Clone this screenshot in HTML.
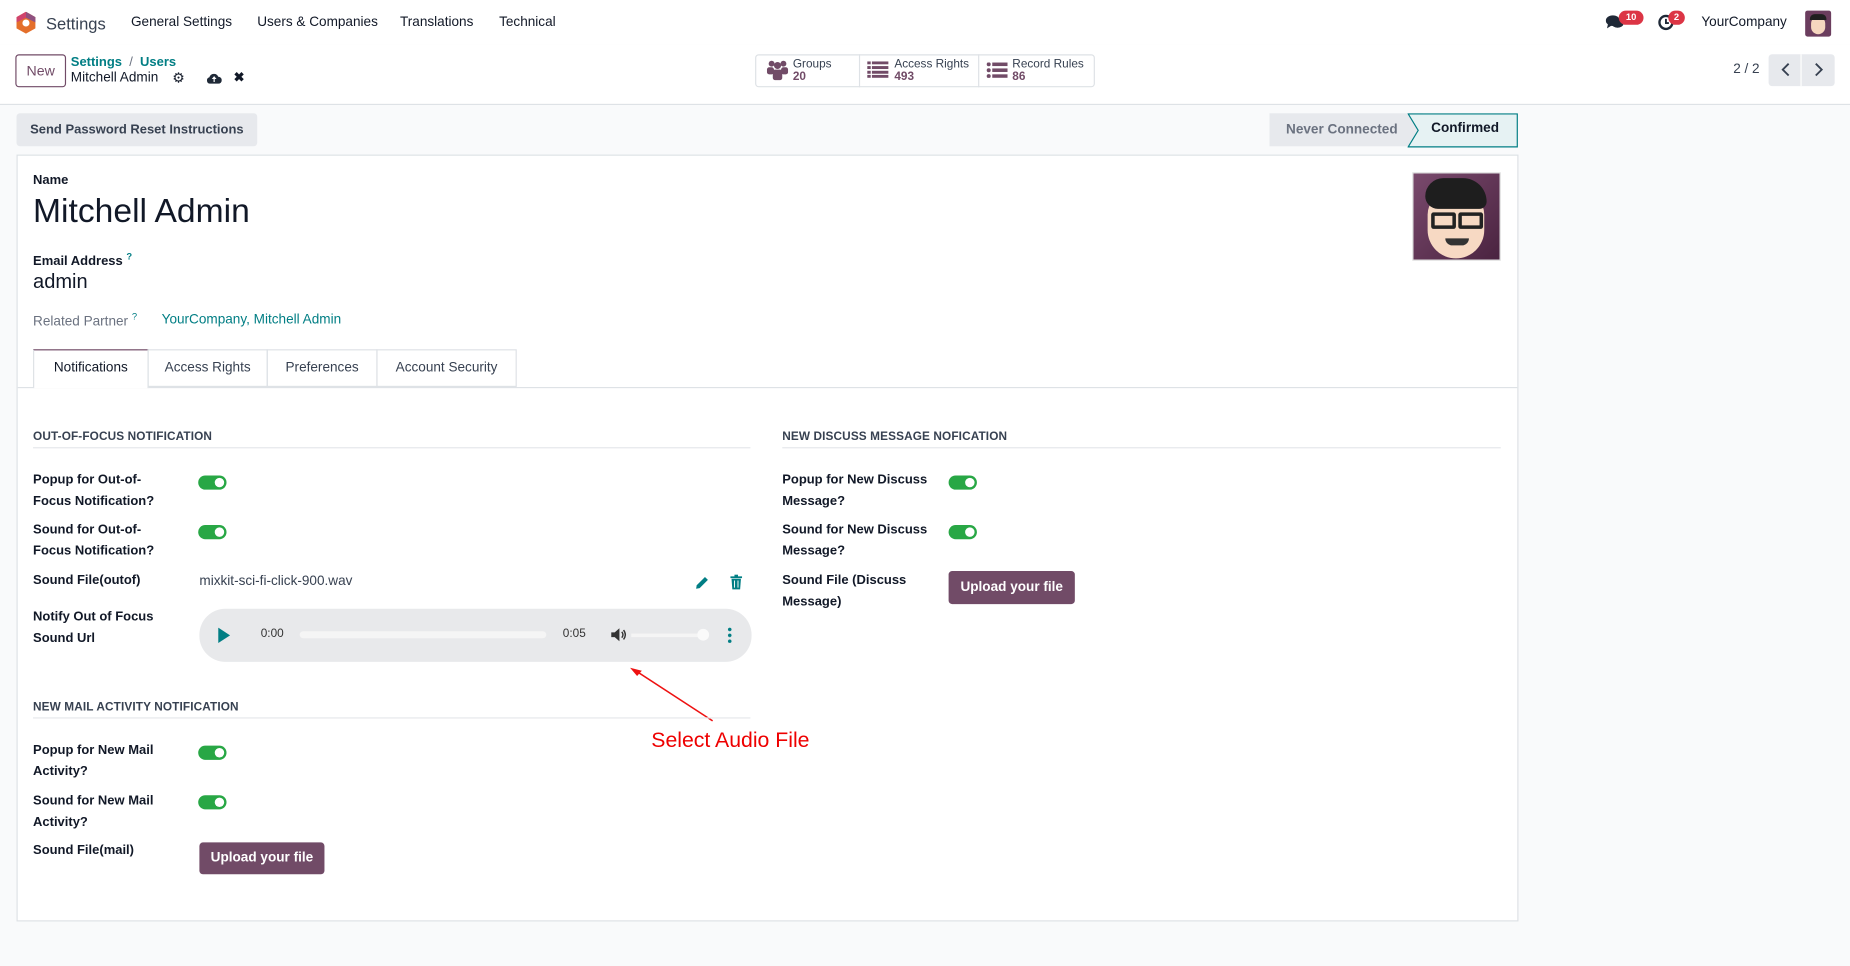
<!DOCTYPE html>
<html><head><meta charset="utf-8"><style>
*{box-sizing:border-box;margin:0;padding:0}
html,body{width:1850px;height:966px;overflow:hidden;background:#f9fafb;font-family:"Liberation Sans",sans-serif;color:#1f2937}
#w{position:absolute;left:0;top:0;width:1568px;height:819px;transform:scale(1.17985);transform-origin:0 0;background:#f9fafb}
.a{position:absolute;white-space:nowrap}
.nav{font-size:11.5px;color:#111827}
.lbl{font-size:11px;font-weight:bold;color:#111827;line-height:17.5px}
.tog{position:absolute;width:24px;height:12px;border-radius:6px;background:#28a745}
.tog:after{content:"";position:absolute;right:2px;top:2px;width:8px;height:8px;border-radius:50%;background:#fff}
.btn{position:absolute;background:#714b67;color:#fff;font-size:11.5px;font-weight:bold;border-radius:3px;text-align:center}
.h{font-size:10px;font-weight:bold;color:#374151;letter-spacing:.1px}
.line{position:absolute;height:1px;background:#e5e7eb}
</style></head><body><div id="w">
<div class="a" style="left:0;top:0;width:1568px;height:38px;background:#fff"></div>
<svg class="a" style="left:13px;top:10px" width="18" height="19" viewBox="0 0 18 19"><path d="M9 0L17 4.5V14L9 18.5L1 14V4.5Z" fill="#e46f2b"/><path d="M9 0L17 4.5V9L9 5Z" fill="#8f5180"/><path d="M1 4.5L9 0V5L1 9Z" fill="#d0446d"/><circle cx="9" cy="9.5" r="3" fill="#fff"/></svg>
<div class="a" style="left:39px;top:12px;font-size:14px;color:#374151">Settings</div>
<div class="a nav" style="left:111px;top:13px">General Settings</div>
<div class="a nav" style="left:218px;top:13px">Users &amp; Companies</div>
<div class="a nav" style="left:339px;top:13px">Translations</div>
<div class="a nav" style="left:423px;top:13px">Technical</div>
<svg class="a" style="left:1361px;top:12px" width="16" height="14" viewBox="0 0 16 14"><ellipse cx="6" cy="5.5" rx="6" ry="4.5" fill="#1f2937"/><path d="M2 8L1 12L6 9Z" fill="#1f2937"/><ellipse cx="10" cy="8" rx="5" ry="3.5" fill="#1f2937"/></svg>
<div class="a" style="left:1372px;top:9px;width:21px;height:12px;border-radius:6px;background:#dc3545;color:#fff;font-size:8px;text-align:center;line-height:12px;font-weight:bold">10</div>
<svg class="a" style="left:1405px;top:12px" width="14" height="14" viewBox="0 0 14 14"><circle cx="7" cy="7" r="5.5" fill="none" stroke="#1f2937" stroke-width="2"/><path d="M7 4V7.5H9.5" stroke="#1f2937" stroke-width="1.6" fill="none"/></svg>
<div class="a" style="left:1414px;top:9px;width:14px;height:12px;border-radius:6px;background:#dc3545;color:#fff;font-size:8px;text-align:center;line-height:12px;font-weight:bold">2</div>
<div class="a nav" style="left:1442px;top:13px">YourCompany</div>
<div class="a" style="left:1530px;top:9px;width:22px;height:22px;border-radius:2px;background:#6b3d5e"><div style="position:absolute;left:5px;top:5px;width:12px;height:15px;border-radius:6px;background:#f6d6bf"></div><div style="position:absolute;left:4px;top:3px;width:14px;height:5px;border-radius:4px 4px 0 0;background:#1f1f1f"></div></div>
<div class="a" style="left:0;top:38px;width:1568px;height:51px;background:#fff;border-bottom:1px solid #dee2e6"></div>
<div class="a" style="left:13px;top:46px;width:43px;height:28px;border:1px solid #714b67;border-radius:3px;color:#714b67;font-size:12px;text-align:center;line-height:26px">New</div>
<div class="a" style="left:60px;top:47px;font-size:11px;color:#017e84;font-weight:bold">Settings <span style="color:#6b7280;font-weight:normal">&nbsp;/&nbsp;</span> Users</div>
<div class="a" style="left:60px;top:60px;font-size:11.5px;color:#111827">Mitchell Admin</div>
<div class="a" style="left:146px;top:59px;font-size:12px;color:#111827">⚙</div>
<svg class="a" style="left:175px;top:61px" width="13" height="10" viewBox="0 0 13 10"><path d="M3 10H10A3 3 0 0 0 10 4A4 4 0 0 0 2.5 4.5A2.8 2.8 0 0 0 3 10Z" fill="#1f2937"/><path d="M6.5 3.5L4.5 6H8.5Z M6 6H7V8.5H6Z" fill="#fff"/></svg>
<div class="a" style="left:198px;top:59px;font-size:11px;font-weight:bold;color:#111827">✖</div>
<div class="a" style="left:640px;top:46px;width:288px;height:28px;border:1px solid #dee2e6;border-radius:3px;background:#fff"></div>
<div class="a" style="left:728px;top:46px;width:1px;height:28px;background:#dee2e6"></div>
<div class="a" style="left:829px;top:46px;width:1px;height:28px;background:#dee2e6"></div>
<svg class="a" style="left:650px;top:50px" width="18" height="18" viewBox="0 0 18 18"><circle cx="4" cy="4" r="2.5" fill="#714b67"/><circle cx="14" cy="4" r="2.5" fill="#714b67"/><circle cx="9" cy="5.5" r="3" fill="#714b67"/><rect x="0" y="7" width="6" height="6" rx="2" fill="#714b67"/><rect x="12" y="7" width="6" height="6" rx="2" fill="#714b67"/><rect x="5" y="9" width="8" height="9" rx="2" fill="#714b67"/></svg>
<div class="a" style="left:672px;top:49px;font-size:10px;color:#374151;line-height:11px">Groups<br><b style="color:#714b67">20</b></div>
<svg class="a" style="left:735px;top:52px" width="18" height="14" viewBox="0 0 18 14"><g fill="#714b67"><rect x="0" y="0" width="3" height="2.5"/><rect x="4" y="0" width="14" height="2.5"/><rect x="0" y="4" width="3" height="2.5"/><rect x="4" y="4" width="14" height="2.5"/><rect x="0" y="8" width="3" height="2.5"/><rect x="4" y="8" width="14" height="2.5"/><rect x="0" y="11.5" width="3" height="2.5"/><rect x="4" y="11.5" width="14" height="2.5"/></g></svg>
<div class="a" style="left:758px;top:49px;font-size:10px;color:#374151;line-height:11px">Access Rights<br><b style="color:#714b67">493</b></div>
<svg class="a" style="left:836px;top:53px" width="18" height="13" viewBox="0 0 18 13"><g fill="#714b67"><circle cx="2" cy="1.5" r="1.7"/><rect x="5" y="0" width="13" height="3"/><circle cx="2" cy="6.5" r="1.7"/><rect x="5" y="5" width="13" height="3"/><circle cx="2" cy="11.5" r="1.7"/><rect x="5" y="10" width="13" height="3"/></g></svg>
<div class="a" style="left:858px;top:49px;font-size:10px;color:#374151;line-height:11px">Record Rules<br><b style="color:#714b67">86</b></div>
<div class="a" style="left:1469px;top:53px;font-size:11.5px;color:#374151">2 / 2</div>
<div class="a" style="left:1499px;top:46px;width:56px;height:27px;background:#e7e9ed;border-radius:3px"></div>
<div class="a" style="left:1526px;top:46px;width:1px;height:27px;background:#fff"></div>
<svg class="a" style="left:1508px;top:52px" width="12" height="14" viewBox="0 0 12 14"><path d="M8 2L3 7L8 12" stroke="#374151" stroke-width="1.6" fill="none"/></svg>
<svg class="a" style="left:1535px;top:52px" width="12" height="14" viewBox="0 0 12 14"><path d="M4 2L9 7L4 12" stroke="#374151" stroke-width="1.6" fill="none"/></svg>
<div class="a" style="left:14px;top:96px;width:204px;height:28px;background:#e7e9ed;border-radius:3px;font-size:11px;font-weight:bold;color:#374151;text-align:center;line-height:28px">Send Password Reset Instructions</div>
<div class="a" style="left:1076px;top:96px;width:130px;height:28px;background:#e7e9ed;font-size:11.5px;font-weight:bold;color:#6b7280;line-height:28px;padding-left:14px">Never Connected</div>
<svg class="a" style="left:1193px;top:96px" width="94" height="29" viewBox="0 0 94 29"><path d="M0.5 0.5H93V28.5H0.5L9 14.5Z" fill="#e6f2f3" stroke="#017e84"/></svg>
<div class="a" style="left:1213px;top:103px;font-size:11.5px;font-weight:bold;color:#111827">Confirmed</div>
<div class="a" style="left:14px;top:131px;width:1273px;height:650px;background:#fff;border:1px solid #dee2e6"></div>
<div class="a lbl" style="left:28px;top:145px">Name</div>
<div class="a" style="left:28px;top:163px;font-size:28.5px;color:#111827">Mitchell Admin</div>
<div class="a lbl" style="left:28px;top:209px">Email Address <sup style="color:#017e84;font-size:8px">?</sup></div>
<div class="a" style="left:28px;top:229px;font-size:17px;color:#111827">admin</div>
<div class="a" style="left:28px;top:264px;font-size:11.5px;color:#6b7280">Related Partner <sup style="color:#017e84;font-size:8px">?</sup></div>
<div class="a" style="left:137px;top:265px;font-size:11.5px;color:#017e84">YourCompany, Mitchell Admin</div>
<div class="a" style="left:1197px;top:146px;width:75px;height:75px;background:linear-gradient(135deg,#7a4a6d,#4a2340);border:1px solid #ddd;overflow:hidden">
<div style="position:absolute;left:12px;top:16px;width:48px;height:56px;border-radius:22px 22px 28px 28px;background:#f7d9c3"></div>
<div style="position:absolute;left:10px;top:4px;width:52px;height:26px;border-radius:20px 26px 8px 14px;background:#1e1e1e"></div>
<div style="position:absolute;left:15px;top:33px;width:21px;height:14px;border:3px solid #222;border-radius:2px"></div>
<div style="position:absolute;left:38px;top:33px;width:21px;height:14px;border:3px solid #222;border-radius:2px"></div>
<div style="position:absolute;left:27px;top:55px;width:20px;height:6px;border-radius:0 0 10px 10px;background:#333"></div>
</div>
<div class="line" style="left:15px;top:328px;width:1271px;background:#dee2e6"></div>
<div class="a" style="left:28px;top:296px;width:98px;height:33px;background:#fff;border:1px solid #dee2e6;border-top:1px solid #714b67;border-bottom:none;font-size:11.5px;color:#111827;text-align:center;line-height:31px">Notifications</div>
<div class="a" style="left:125px;top:296px;width:102px;height:32px;border:1px solid #dee2e6;font-size:11.5px;color:#374151;text-align:center;line-height:30px">Access Rights</div>
<div class="a" style="left:226px;top:296px;width:94px;height:32px;border:1px solid #dee2e6;font-size:11.5px;color:#374151;text-align:center;line-height:30px">Preferences</div>
<div class="a" style="left:319px;top:296px;width:119px;height:32px;border:1px solid #dee2e6;font-size:11.5px;color:#374151;text-align:center;line-height:30px">Account Security</div>
<div class="a h" style="left:28px;top:365px">OUT-OF-FOCUS NOTIFICATION</div>
<div class="line" style="left:28px;top:379px;width:608px"></div>
<div class="a lbl" style="left:28px;top:399px">Popup for Out-of-<br>Focus Notification?</div>
<div class="tog" style="left:168px;top:403px"></div>
<div class="a lbl" style="left:28px;top:441px">Sound for Out-of-<br>Focus Notification?</div>
<div class="tog" style="left:168px;top:445px"></div>
<div class="a lbl" style="left:28px;top:484px">Sound File(outof)</div>
<div class="a" style="left:169px;top:487px;font-size:11.5px;color:#374151">mixkit-sci-fi-click-900.wav</div>
<svg class="a" style="left:589px;top:488px" width="12" height="12" viewBox="0 0 12 12"><path d="M1 11L1.5 8L8.5 1L11 3.5L4 10.5Z" fill="#017e84"/></svg>
<svg class="a" style="left:619px;top:487px" width="10" height="13" viewBox="0 0 10 13"><rect x="0" y="1.5" width="10" height="1.5" fill="#017e84"/><rect x="3.5" y="0" width="3" height="2" fill="#017e84"/><path d="M1 3.5H9L8.3 12.5H1.7Z" fill="#017e84"/><path d="M3.5 5V11M6.5 5V11" stroke="#fff" stroke-width=".8"/></svg>
<div class="a lbl" style="left:28px;top:515px">Notify Out of Focus<br>Sound Url</div>
<div class="a" style="left:169px;top:516px;width:468px;height:45px;border-radius:22px;background:#e8e9eb"></div>
<svg class="a" style="left:184px;top:532px" width="11" height="13" viewBox="0 0 11 13"><path d="M1 0L11 6.5L1 13Z" fill="#017e84"/></svg>
<div class="a" style="left:221px;top:532px;font-size:10px;color:#333">0:00</div>
<div class="a" style="left:254px;top:535px;width:209px;height:6px;border-radius:3px;background:#f5f5f5"></div>
<div class="a" style="left:477px;top:532px;font-size:10px;color:#333">0:05</div>
<svg class="a" style="left:518px;top:532px" width="14" height="12" viewBox="0 0 14 12"><path d="M0 4H3L7 0.5V11.5L3 8H0Z" fill="#333"/><path d="M9 3.5Q11 6 9 8.5M10.5 2Q13.5 6 10.5 10" stroke="#333" stroke-width="1.2" fill="none"/></svg>
<div class="a" style="left:535px;top:537px;width:62px;height:3px;background:#f5f5f5"></div>
<div class="a" style="left:591px;top:533px;width:10px;height:10px;border-radius:50%;background:#fafafa"></div>
<div class="a" style="left:617px;top:531px;width:3px;height:14px;background:radial-gradient(circle,#017e84 1.4px,transparent 1.6px) 0 0/3px 5px"></div>
<svg class="a" style="left:530px;top:563px" width="80" height="52" viewBox="0 0 80 52"><path d="M74 48L8 5" stroke="#e11" stroke-width="1.3"/><path d="M4 3L14 5.5L10 10Z" fill="#e11"/></svg>
<div class="a" style="left:552px;top:617px;font-size:18px;color:#e00">Select Audio File</div>
<div class="a h" style="left:28px;top:594px">NEW MAIL ACTIVITY NOTIFICATION</div>
<div class="line" style="left:28px;top:608px;width:608px"></div>
<div class="a lbl" style="left:28px;top:628px">Popup for New Mail<br>Activity?</div>
<div class="tog" style="left:168px;top:632px"></div>
<div class="a lbl" style="left:28px;top:671px">Sound for New Mail<br>Activity?</div>
<div class="tog" style="left:168px;top:674px"></div>
<div class="a lbl" style="left:28px;top:713px">Sound File(mail)</div>
<div class="btn" style="left:169px;top:714px;width:106px;height:27px;line-height:27px">Upload your file</div>
<div class="a h" style="left:663px;top:365px">NEW DISCUSS MESSAGE NOFICATION</div>
<div class="line" style="left:663px;top:379px;width:609px"></div>
<div class="a lbl" style="left:663px;top:399px">Popup for New Discuss<br>Message?</div>
<div class="tog" style="left:804px;top:403px"></div>
<div class="a lbl" style="left:663px;top:441px">Sound for New Discuss<br>Message?</div>
<div class="tog" style="left:804px;top:445px"></div>
<div class="a lbl" style="left:663px;top:484px">Sound File (Discuss<br>Message)</div>
<div class="btn" style="left:804px;top:484px;width:107px;height:28px;line-height:28px">Upload your file</div>
</div></body></html>
